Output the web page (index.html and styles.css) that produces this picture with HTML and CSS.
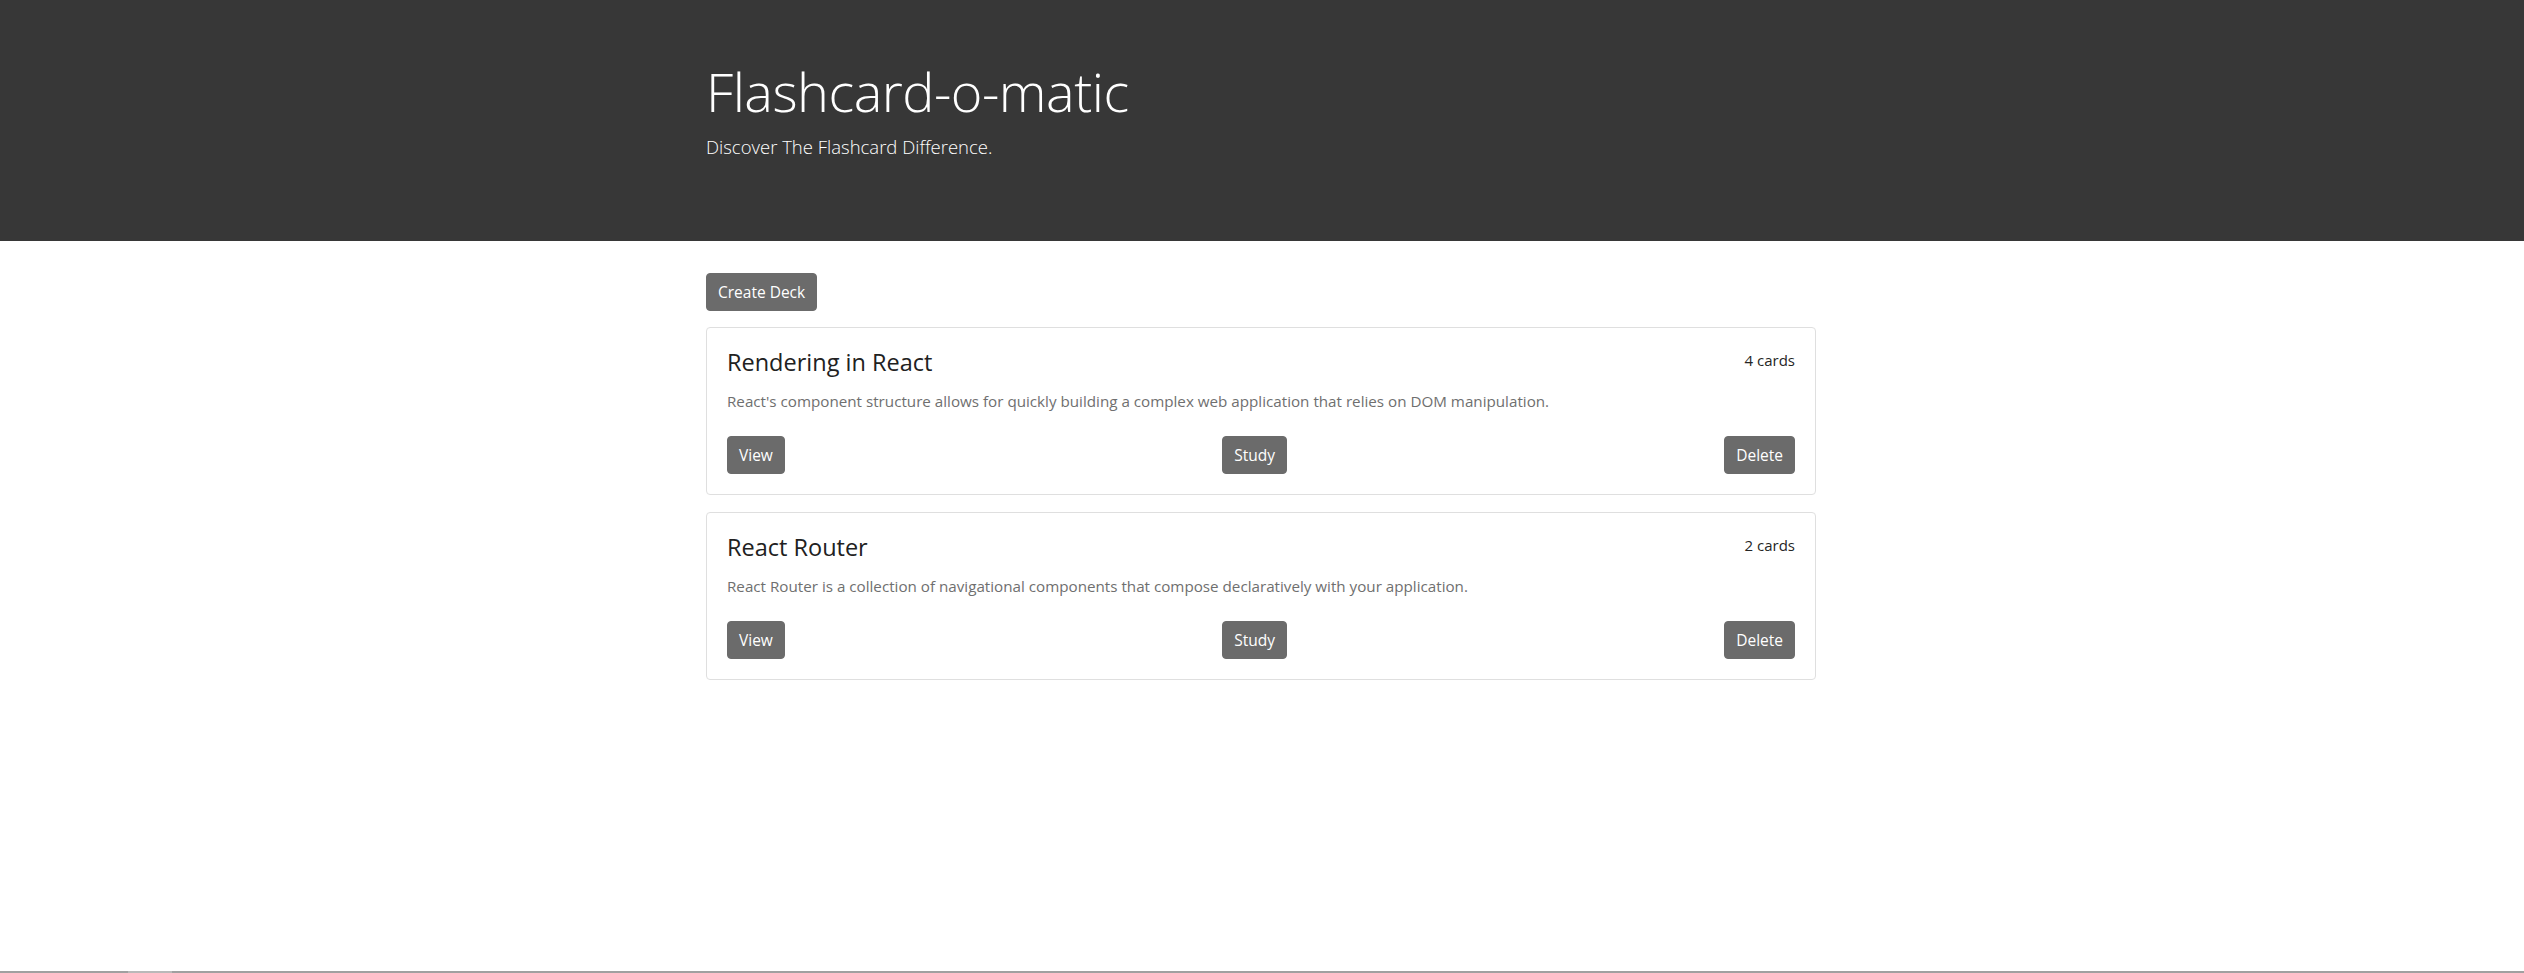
FILE: index.html
```html
<!DOCTYPE html>
<html lang="en">
<head>
<meta charset="utf-8">
<title>Flashcard-o-matic</title>
<link rel="stylesheet" href="styles.css">
</head>
<body>
<header class="jumbotron">
  <div class="container">
    <h1 class="display">Flashcard-o-matic</h1>
    <p class="lead">Discover The Flashcard Difference.</p>
  </div>
</header>
<main class="container main">
  <div class="toolbar"><button class="btn">Create Deck</button></div>
  <div class="decks">
    <section class="card">
      <div class="card-head">
        <h5 class="card-title">Rendering in React</h5>
        <span class="count">4 cards</span>
      </div>
      <p class="card-text">React's component structure allows for quickly building a complex web application that relies on DOM manipulation.</p>
      <div class="actions">
        <button class="btn">View</button>
        <button class="btn">Study</button>
        <button class="btn">Delete</button>
      </div>
    </section>
    <section class="card">
      <div class="card-head">
        <h5 class="card-title">React Router</h5>
        <span class="count">2 cards</span>
      </div>
      <p class="card-text">React Router is a collection of navigational components that compose declaratively with your application.</p>
      <div class="actions">
        <button class="btn">View</button>
        <button class="btn">Study</button>
        <button class="btn">Delete</button>
      </div>
    </section>
  </div>
</main>
<div class="hscroll"><div class="thumb"></div></div>
</body>
</html>
```

FILE: styles.css
```css
* { box-sizing: border-box; }
html, body { margin: 0; padding: 0; }
body {
  font-family: "Open Sans", "Noto Sans", sans-serif;
  color: #222;
  background: #fff;
  font-size: 16px;
  line-height: 1.5;
}
.container {
  width: 1140px;
  margin: 0 auto;
  padding: 0 16px 0 14px;
}
.jumbotron {
  background: #373737;
  color: #fff;
  height: 241px;
  padding-top: 59px;
}
.display {
  margin: 0 0 8px;
  font-size: 54px;
  font-weight: 300;
  line-height: 1.2;
  letter-spacing: -0.5px;
}
.lead {
  margin: 0;
  font-size: 18.5px;
  font-weight: 300;
  line-height: 30px;
}
.main { padding-top: 32px; }
.toolbar { margin-bottom: 16px; display: flex; }
.btn {
  font-family: inherit;
  font-size: 15.5px;
  line-height: 24px;
  height: 38px;
  padding: 6px 11px;
  color: #fff;
  background: #6b6b6b;
  border: 1px solid #6b6b6b;
  border-radius: 4px;
}
.decks { display: flex; flex-direction: column; gap: 17px; }
.card {
  border: 1px solid #dfdfdf;
  border-radius: 4px;
  padding: 20px;
  height: 168px;
}
.card-head {
  display: flex;
  justify-content: space-between;
  align-items: flex-start;
}
.card-title {
  margin: 0 0 12px;
  font-size: 23.5px;
  font-weight: 500;
  line-height: 29px;
  color: #212121;
}
.count { font-size: 15px; line-height: 24px; color: #252525; }
.card-text {
  margin: 0 0 23px;
  font-size: 15.2px;
  line-height: 24px;
  color: #6f6f6f;
}
.actions { display: flex; justify-content: space-between; }
.hscroll {
  position: fixed;
  left: 0; right: 0; bottom: 0;
  height: 2px;
  background: #a0a0a0;
}
.thumb {
  margin-left: 128px;
  width: 44px;
  height: 2px;
  background: #b9b9b9;
}
```
